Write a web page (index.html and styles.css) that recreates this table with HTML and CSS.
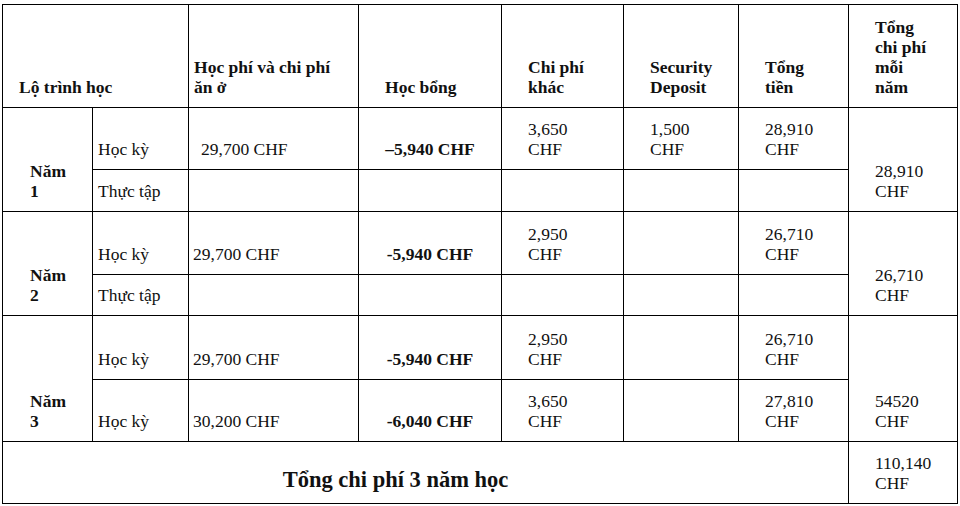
FILE: index.html
```html
<!DOCTYPE html>
<html lang="vi">
<head>
<meta charset="utf-8">
<title>Chi phí học tập</title>
<link rel="stylesheet" href="styles.css">
</head>
<body>
<table class="cost">
  <colgroup>
    <col class="c1"><col class="c2"><col class="c3"><col class="c4">
    <col class="c5"><col class="c6"><col class="c7"><col class="c8">
  </colgroup>
  <thead>
    <tr class="r-head">
      <th colspan="2" class="h-route">Lộ trình học</th>
      <th class="h-fee">Học phí và chi phí<br>ăn ở</th>
      <th class="pad">Học bổng</th>
      <th class="pad">Chi phí<br>khác</th>
      <th class="pad">Security<br>Deposit</th>
      <th class="pad">Tổng<br>tiền</th>
      <th class="pad">Tổng<br>chi phí<br>mỗi<br>năm</th>
    </tr>
  </thead>
  <tbody>
    <tr class="r-62">
      <th rowspan="2" class="year">Năm<br>1</th>
      <td class="term">Học kỳ</td>
      <td class="fee-indent">29,700 CHF</td>
      <td class="grant">–5,940 CHF</td>
      <td class="pad">3,650<br>CHF</td>
      <td class="pad">1,500<br>CHF</td>
      <td class="pad">28,910<br>CHF</td>
      <td rowspan="2" class="pad">28,910<br>CHF</td>
    </tr>
    <tr class="r-42">
      <td class="term">Thực tập</td>
      <td></td><td></td><td></td><td></td><td></td>
    </tr>
    <tr class="r-63">
      <th rowspan="2" class="year">Năm<br>2</th>
      <td class="term">Học kỳ</td>
      <td class="fee">29,700 CHF</td>
      <td class="grant">-5,940 CHF</td>
      <td class="pad">2,950<br>CHF</td>
      <td></td>
      <td class="pad">26,710<br>CHF</td>
      <td rowspan="2" class="pad">26,710<br>CHF</td>
    </tr>
    <tr class="r-41">
      <td class="term">Thực tập</td>
      <td></td><td></td><td></td><td></td><td></td>
    </tr>
    <tr class="r-64">
      <th rowspan="2" class="year">Năm<br>3</th>
      <td class="term">Học kỳ</td>
      <td class="fee">29,700 CHF</td>
      <td class="grant">-5,940 CHF</td>
      <td class="pad">2,950<br>CHF</td>
      <td></td>
      <td class="pad">26,710<br>CHF</td>
      <td rowspan="2" class="pad">54520<br>CHF</td>
    </tr>
    <tr class="r-62">
      <td class="term">Học kỳ</td>
      <td class="fee">30,200 CHF</td>
      <td class="grant">-6,040 CHF</td>
      <td class="pad">3,650<br>CHF</td>
      <td></td>
      <td class="pad">27,810<br>CHF</td>
    </tr>
    <tr class="r-62">
      <th colspan="7" class="grand">Tổng chi phí 3 năm học</th>
      <td class="pad">110,140<br>CHF</td>
    </tr>
  </tbody>
</table>
</body>
</html>
```

FILE: styles.css
```css
html, body {
  margin: 0;
  padding: 0;
  background: #fff;
}

body {
  padding: 4px 0 0 2px;
}

.cost {
  border-collapse: collapse;
  table-layout: fixed;
  width: 955px;
  font-family: "Liberation Serif", "Times New Roman", serif;
  font-size: 17.5px;
  line-height: 20px;
  color: #111;
}

.cost th,
.cost td {
  border: 1px solid #000;
  padding: 0 0 10px 0;
  vertical-align: bottom;
  text-align: left;
  white-space: nowrap;
  overflow: hidden;
}

.cost th { font-weight: bold; }
.cost td { font-weight: normal; }

.c1 { width: 90px; }
.c2 { width: 96px; }
.c3 { width: 170px; }
.c4 { width: 143px; }
.c5 { width: 122px; }
.c6 { width: 115px; }
.c7 { width: 110px; }
.c8 { width: 109px; }

.r-head { height: 103px; }
.r-62 { height: 62px; }
.r-42 { height: 42px; }
.r-63 { height: 63px; }
.r-41 { height: 41px; }
.r-64 { height: 64px; }

.cost .h-route { padding-left: 16px; }
.cost .h-fee { padding-left: 5px; }
.cost .pad { padding-left: 26px; }

.cost .year { padding-left: 27px; }
.cost .term { padding-left: 5px; }
.cost .fee { padding-left: 4px; }
.cost .fee-indent { padding-left: 12px; }

.cost .grant {
  font-weight: bold;
  text-align: center;
}

.cost .grand {
  font-size: 22.5px;
  line-height: 26px;
  text-align: center;
  padding-right: 60px;
  padding-bottom: 10px;
}
```
